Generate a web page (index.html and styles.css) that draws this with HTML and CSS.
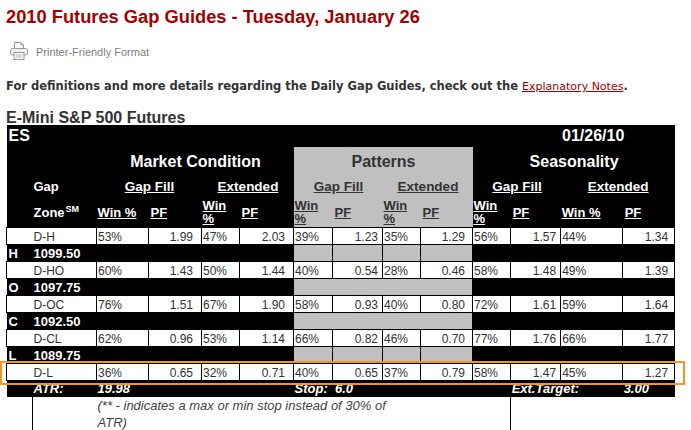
FILE: index.html
```html
<!DOCTYPE html>
<html>
<head>
<meta charset="utf-8">
<title>2010 Futures Gap Guides</title>
<link rel="stylesheet" href="styles.css">
</head>
<body>
<div class="page">
  <h1 class="title">2010 Futures Gap Guides - Tuesday, January 26</h1>
  <div class="printer">
    <svg class="printer-icon" width="18" height="18" viewBox="0 0 18 18">
      <path d="M4.5 6.5 V0.5 H11 L13.5 3 V6.5" fill="#fff" stroke="#9a9a9a"/>
      <path d="M11 0.5 V3 H13.5" fill="none" stroke="#9a9a9a"/>
      <rect x="0.5" y="6.5" width="17" height="6.5" rx="2" fill="#f0f0f0" stroke="#9a9a9a"/>
      <rect x="4" y="10.5" width="10" height="7" fill="#fff" stroke="#9a9a9a"/>
      <path d="M5.5 13 H12.5 M5.5 15 H12.5" stroke="#b0b0b0"/>
    </svg>
    <span>Printer-Friendly Format</span>
  </div>
  <p class="intro">For definitions and more details regarding the Daily Gap Guides, check out the <a href="#">Explanatory Notes</a>.</p>
  <h2 class="subtitle">E-Mini S&amp;P 500 Futures</h2>

  <div class="table-wrap">
    <table class="gap">
      <colgroup>
        <col class="c-let"><col class="c-zone">
        <col class="c-a"><col class="c-b"><col class="c-c"><col class="c-d">
        <col class="c-e"><col class="c-f"><col class="c-g"><col class="c-h">
        <col class="c-i"><col class="c-j"><col class="c-k"><col class="c-l">
      </colgroup>
      <thead>
        <tr class="r-es">
          <th colspan="11" class="hk left es">ES</th>
          <th colspan="3" class="hk date">01/26/10</th>
        </tr>
        <tr class="r-sec">
          <th colspan="2" class="hk"></th>
          <th colspan="4" class="hk sec">Market Condition</th>
          <th colspan="4" class="hg sec">Patterns</th>
          <th colspan="4" class="hk sec">Seasonality</th>
        </tr>
        <tr class="r-grp">
          <th class="hk"></th>
          <th class="hk left lbl">Gap</th>
          <th colspan="2" class="hk grp"><u>Gap Fill</u></th>
          <th colspan="2" class="hk grp"><u>Extended</u></th>
          <th colspan="2" class="hg grp"><u>Gap Fill</u></th>
          <th colspan="2" class="hg grp"><u>Extended</u></th>
          <th colspan="2" class="hk grp"><u>Gap Fill</u></th>
          <th colspan="2" class="hk grp"><u>Extended</u></th>
        </tr>
        <tr class="r-col">
          <th class="hk"></th>
          <th class="hk left lbl zone">Zone<sup>SM</sup></th>
          <th class="hk col"><u>Win %</u></th>
          <th class="hk col pf"><u>PF</u></th>
          <th class="hk col"><u>Win %</u></th>
          <th class="hk col pf"><u>PF</u></th>
          <th class="hg col"><u>Win %</u></th>
          <th class="hg col pf"><u>PF</u></th>
          <th class="hg col"><u>Win %</u></th>
          <th class="hg col pf"><u>PF</u></th>
          <th class="hk col"><u>Win %</u></th>
          <th class="hk col pf"><u>PF</u></th>
          <th class="hk col"><u>Win %</u></th>
          <th class="hk col pf"><u>PF</u></th>
        </tr>
      </thead>
      <tbody>
        <tr class="r-data">
          <td class="w wl"></td><td class="w zn">D-H</td>
          <td class="w">53%</td><td class="w num p8">1.99</td><td class="w">47%</td><td class="w num p8">2.03</td>
          <td class="w">39%</td><td class="w num p4">1.23</td><td class="w">35%</td><td class="w num p7">1.29</td>
          <td class="w">56%</td><td class="w num p4">1.57</td><td class="w">44%</td><td class="w num p6">1.34</td>
        </tr>
        <tr class="r-lvl">
          <td class="k lt">H</td><td class="k lv">1099.50</td>
          <td colspan="4" class="k"></td>
          <td class="g"></td><td class="g"></td><td class="g"></td><td class="g"></td>
          <td colspan="4" class="k"></td>
        </tr>
        <tr class="r-data">
          <td class="w wl"></td><td class="w zn">D-HO</td>
          <td class="w">60%</td><td class="w num p8">1.43</td><td class="w">50%</td><td class="w num p8">1.44</td>
          <td class="w">40%</td><td class="w num p4">0.54</td><td class="w">28%</td><td class="w num p7">0.46</td>
          <td class="w">58%</td><td class="w num p4">1.48</td><td class="w">49%</td><td class="w num p6">1.39</td>
        </tr>
        <tr class="r-lvl">
          <td class="k lt">O</td><td class="k lv">1097.75</td>
          <td colspan="4" class="k"></td>
          <td colspan="4" class="g"></td>
          <td colspan="4" class="k"></td>
        </tr>
        <tr class="r-data">
          <td class="w wl"></td><td class="w zn">D-OC</td>
          <td class="w">76%</td><td class="w num p8">1.51</td><td class="w">67%</td><td class="w num p8">1.90</td>
          <td class="w">58%</td><td class="w num p4">0.93</td><td class="w">40%</td><td class="w num p7">0.80</td>
          <td class="w">72%</td><td class="w num p4">1.61</td><td class="w">59%</td><td class="w num p6">1.64</td>
        </tr>
        <tr class="r-lvl">
          <td class="k lt">C</td><td class="k lv">1092.50</td>
          <td colspan="4" class="k"></td>
          <td colspan="4" class="g"></td>
          <td colspan="4" class="k"></td>
        </tr>
        <tr class="r-data">
          <td class="w wl"></td><td class="w zn">D-CL</td>
          <td class="w">62%</td><td class="w num p8">0.96</td><td class="w">53%</td><td class="w num p8">1.14</td>
          <td class="w">66%</td><td class="w num p4">0.82</td><td class="w">46%</td><td class="w num p7">0.70</td>
          <td class="w">77%</td><td class="w num p4">1.76</td><td class="w">66%</td><td class="w num p6">1.77</td>
        </tr>
        <tr class="r-lvl">
          <td class="k lt">L</td><td class="k lv">1089.75</td>
          <td colspan="4" class="k"></td>
          <td class="g"></td><td class="g"></td><td class="g"></td><td class="g"></td>
          <td colspan="4" class="k"></td>
        </tr>
        <tr class="r-data">
          <td class="w wl"></td><td class="w zn">D-L</td>
          <td class="w">36%</td><td class="w num p8">0.65</td><td class="w">32%</td><td class="w num p8">0.71</td>
          <td class="w">40%</td><td class="w num p4">0.65</td><td class="w">37%</td><td class="w num p7">0.79</td>
          <td class="w">58%</td><td class="w num p4">1.47</td><td class="w">45%</td><td class="w num p6">1.27</td>
        </tr>
        <tr class="r-atr">
          <td class="k"></td><td class="k st">ATR:</td>
          <td colspan="4" class="k st">19.98</td>
          <td colspan="4" class="k st">Stop:&nbsp; 6.0</td>
          <td class="k"></td>
          <td colspan="2" class="k st">Ext.Target:</td>
          <td class="k st">3.00</td>
        </tr>
        <tr class="r-note">
          <td class="note-l"></td><td></td>
          <td colspan="7" class="note"><div class="note-text">(** - indicates a max or min stop instead of 30% of ATR)</div></td>
          <td colspan="2" class="note-r"></td>
          <td colspan="3"></td>
        </tr>
      </tbody>
    </table>
    <div class="highlight"></div>
  </div>
</div>
</body>
</html>
```

FILE: styles.css
```css
html, body {
  margin: 0;
  padding: 0;
  background: #fff;
}

.page {
  padding: 6px 6px 0 6px;
  font-family: "Liberation Sans", Arial, sans-serif;
  color: #333;
}

.title {
  margin: 0;
  font-size: 18.3px;
  line-height: 22px;
  font-weight: bold;
  color: #a30000;
}

.printer {
  display: flex;
  align-items: center;
  gap: 8px;
  height: 18px;
  margin-top: 14px;
  padding-left: 4px;
  font-size: 11px;
  color: #808080;
}

.printer-icon {
  display: block;
  flex: none;
}

.printer span {
  padding-top: 2px;
}

.intro {
  margin: 19px 0 0 0;
  font-family: "DejaVu Sans", Verdana, sans-serif;
  font-size: 11.5px;
  line-height: 14px;
  font-weight: bold;
  color: #333;
}

.intro a {
  font-size: 11px;
  font-weight: normal;
  color: #a30000;
  text-decoration: underline;
}

.subtitle {
  margin: 17px 0 0 0;
  font-size: 16px;
  line-height: 14px;
  font-weight: bold;
  color: #333;
}

.table-wrap {
  position: relative;
  width: 669px;
}

.gap {
  border-collapse: collapse;
  table-layout: fixed;
  width: 669px;
  font-family: "Liberation Sans", Arial, sans-serif;
}

.c-let { width: 26px; }
.c-zone { width: 64px; }
.c-a { width: 52px; }
.c-b { width: 53px; }
.c-c { width: 38px; }
.c-d { width: 54px; }
.c-e { width: 39px; }
.c-f { width: 50px; }
.c-g { width: 38px; }
.c-h { width: 52px; }
.c-i { width: 38px; }
.c-j { width: 50px; }
.c-k { width: 62px; }
.c-l { width: 52px; }

.gap th,
.gap td {
  padding: 0 0 0 1px;
  border: none;
  text-align: left;
  vertical-align: middle;
  white-space: normal;
}

/* header */
.hk {
  background: #000;
  color: #fff;
}

.hg {
  background: #c0c0c0;
  color: #333;
}

.gap th {
  font-weight: bold;
}

.r-es th {
  height: 22px;
  font-size: 16px;
  line-height: 22px;
}

.gap th.es {
  padding-left: 2px;
}

.gap th.date,
.gap th.sec,
.gap th.grp {
  text-align: center;
}

.r-sec th {
  height: 30px;
  font-size: 16px;
  line-height: 20px;
}

.r-grp th {
  height: 20px;
  font-size: 13.5px;
  line-height: 20px;
}

.r-grp th.lbl {
  font-size: 13px;
}

.r-col th {
  height: 30px;
  font-size: 13px;
  line-height: 13px;
}

.gap th.pf {
  padding-left: 2px;
}

.zone sup {
  font-size: 9px;
  line-height: 0;
  vertical-align: 5px;
  margin-left: 1px;
}

.gap u {
  text-decoration: underline;
  text-underline-offset: 1px;
}

/* body */
.r-data td {
  font-size: 12px;
  line-height: 14px;
  padding-top: 2px;
  color: #333;
}

.w {
  background: #fff;
  border: 1px solid #000 !important;
}

.gap td.wl {
  border-right-style: hidden !important;
}

.gap td.zn {
  border-left-style: hidden !important;
}

.k {
  background: #000;
  color: #fff;
}

.g {
  background: #c0c0c0;
  border: 1px solid #000 !important;
}

.r-lvl td {
  font-size: 13px;
  line-height: 14px;
  padding-top: 2px;
  font-weight: bold;
}

.gap td.lt {
  padding-left: 2px;
}

.gap td.num {
  text-align: right;
}

.gap td.p8 { padding-right: 8px; }
.gap td.p7 { padding-right: 7px; }
.gap td.p6 { padding-right: 6px; }
.gap td.p4 { padding-right: 4px; }

.r-atr td {
  font-size: 13px;
  line-height: 16px;
  font-weight: bold;
  font-style: italic;
}

.r-note td {
  height: 40px;
  vertical-align: top;
}

.gap td.note {
  font-size: 13px;
  line-height: 16.5px;
  font-style: italic;
  color: #444;
  padding-top: 1px;
}

.note-text {
  width: 296px;
}

.gap td.note-l {
  border-right: 1px solid #000;
}

.gap td.note-r {
  border-right: 1px solid #000;
}

.highlight {
  position: absolute;
  top: 236px;
  left: -6px;
  width: 685px;
  height: 24px;
  box-sizing: border-box;
  border: 2px solid #f7941d;
  pointer-events: none;
}
```
